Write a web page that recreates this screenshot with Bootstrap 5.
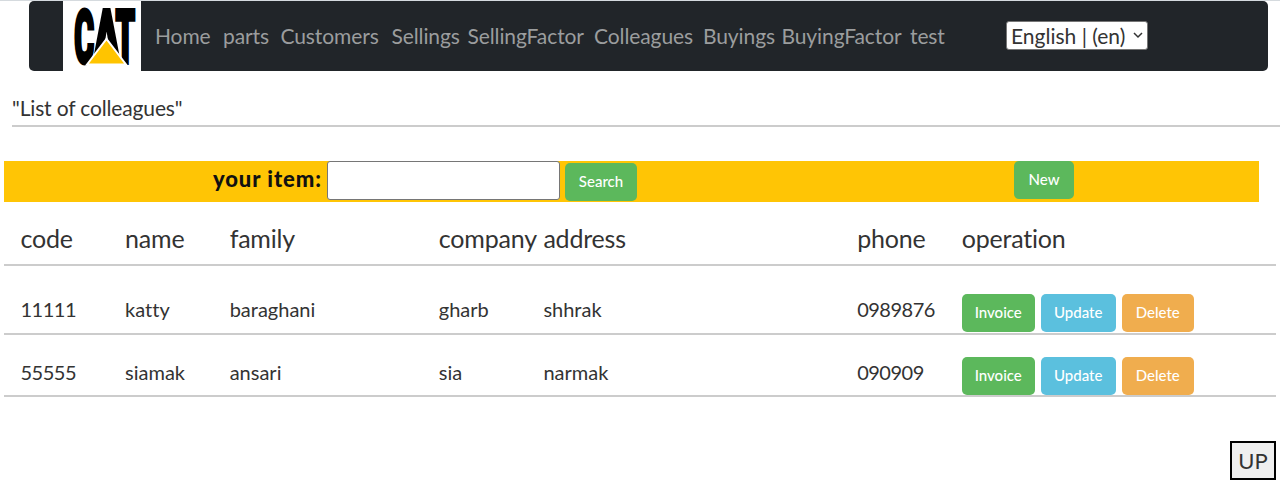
<!DOCTYPE html>
<html lang="en">
<head>
<meta charset="utf-8">
<meta name="viewport" content="width=device-width, initial-scale=1">
<title>List of colleagues</title>
<link href="https://cdn.jsdelivr.net/npm/bootstrap@5.3.0/dist/css/bootstrap.min.css" rel="stylesheet">
<style>
  body { font-family: "Gill Sans", "Gill Sans MT", Lato, sans-serif; font-size: 21px; line-height: 30px; color: #333; border-top: 1px solid #d5dade; overflow: hidden; font-variant-ligatures: none; }
  .topbar { margin: 0 12.5px 0 29px; height: 69.5px; padding: 0 0 0 34px; background: #212529; border-radius: 5px; }
  .logo { width: 78px; height: 70px; background: #fff; overflow: visible; }
  .menu { display: grid; grid-template-columns: 68px 57.5px 111px 76px 126.5px 109px 78.5px 128.5px 96px; margin-left: 14px; line-height: 30px; }
  .menu .nav-link { color: #9b9d9e; padding: 0; white-space: nowrap; letter-spacing: -.1px; }
  .lang { width: 142px; height: 29px; padding: 0 4px 0 4px; background: #fff; border: 1px solid #767676; border-radius: 3px; font-size: 21px; color: #333; }
  .heading { margin: 22px 0 0 12px; height: 34px; border-bottom: 2px solid #ccc; letter-spacing: -.15px; }
  .searchbar { margin: 34px 21.5px 0 4px; height: 41px; background: #ffc505; }
  .searchbar label { width: 323px; padding-right: 5px; text-align: right; color: #111; font-weight: 900; font-size: 22px; letter-spacing: .95px; line-height: 36px; }
  .searchbar input { width: 233px; height: 39px; border: 1px solid #767676; border-radius: 3px; }
  .act { height: 38px; padding: 0; border: 0; border-radius: 5px; color: #fff !important; font-size: 15px; font-weight: 500; line-height: 37px; text-align: center; }
  .green { background: #5cb85c !important; } .blue { background: #5bc0de !important; } .orange { background: #f0ad4e !important; }
  .line { margin: 0 4px; border-bottom: 2px solid #ccc; }
  .line .row { width: 1255px; margin: 0; }
  .line .row > * { padding: 0 0 0 16.5px; white-space: nowrap; }
  .titles { height: 64px; padding-top: 21px; font-size: 25px; letter-spacing: -.2px; }
  .entry { padding-top: 28px; height: 69px; font-size: 20px; }
  .entry + .entry { height: 62px; padding-top: 22px; }
  .entry .row > * { line-height: 31px; }
  .code, .phone { letter-spacing: -.5px; }
  .up { position: fixed; left: 1230px; top: 441px; width: 46px; height: 39px; border: 2px solid #000; background: #efefef; color: #333; padding: 0; line-height: 32px; font-size: 22px; }
</style>
</head>
<body>
<nav class="topbar d-flex align-items-center">
  <svg class="logo flex-shrink-0" viewBox="0 0 78 70" role="img" aria-label="CAT">
    <g font-family="Roboto" font-weight="900" font-size="74" stroke="#000" stroke-width="4">
      <text transform="translate(11.2 61.5) scale(.41 1)">C</text>
      <text transform="translate(30.5 61.5) scale(.52 1)">A</text>
      <text transform="translate(52.5 61.5) scale(.42 1)">T</text>
    </g>
    <path d="M24 63.5 43.5 38 63 63.5z" fill="#ffc400" stroke="#fff" stroke-width="2"/>
  </svg>
  <div class="menu">
    <a class="nav-link" href="#">Home</a><a class="nav-link" href="#">parts</a><a class="nav-link" href="#">Customers</a><a class="nav-link" href="#">Sellings</a><a class="nav-link" href="#">SellingFactor</a><a class="nav-link" href="#">Colleagues</a><a class="nav-link" href="#">Buyings</a><a class="nav-link" href="#">BuyingFactor</a><a class="nav-link" href="#">test</a>
  </div>
  <button class="lang d-flex align-items-center justify-content-between text-nowrap" type="button"><span>English | (en)</span>
    <svg width="10" height="7" viewBox="0 0 10 7" fill="none" stroke="#333" stroke-width="1.5"><path d="m1 1 4 4 4-4"/></svg>
  </button>
</nav>
<div class="heading">"List of colleagues"</div>
<form class="searchbar d-flex align-items-start">
  <label for="item">your item:</label>
  <input id="item" type="text">
  <button class="btn act green" type="button" style="width:72px;margin:2px 0 0 5px">Search</button>
  <button class="btn act green" type="button" style="width:60px;margin-left:377px">New</button>
</form>
<main>
  <div class="line titles"><div class="row">
    <div class="col-1">code</div><div class="col-1">name</div><div class="col-2">family</div><div class="col-1">company</div><div class="col-3">address</div><div class="col-1">phone</div><div class="col-3">operation</div>
  </div></div>
  <div class="line entry"><div class="row">
    <div class="col-1 code">11111</div><div class="col-1">katty</div><div class="col-2">baraghani</div><div class="col-1">gharb</div><div class="col-3">shhrak</div><div class="col-1 phone">0989876</div>
    <div class="col-3 d-flex"><button class="btn act green" style="width:73px">Invoice</button><button class="btn act blue" style="width:75px;margin:0 6px">Update</button><button class="btn act orange" style="width:72px">Delete</button></div>
  </div></div>
  <div class="line entry"><div class="row">
    <div class="col-1 code">55555</div><div class="col-1">siamak</div><div class="col-2">ansari</div><div class="col-1">sia</div><div class="col-3">narmak</div><div class="col-1 phone">090909</div>
    <div class="col-3 d-flex"><button class="btn act green" style="width:73px">Invoice</button><button class="btn act blue" style="width:75px;margin:0 6px">Update</button><button class="btn act orange" style="width:72px">Delete</button></div>
  </div></div>
</main>
<button class="up" type="button">UP</button>
<script src="https://cdn.jsdelivr.net/npm/bootstrap@5.3.0/dist/js/bootstrap.bundle.min.js"></script>
</body>
</html>
